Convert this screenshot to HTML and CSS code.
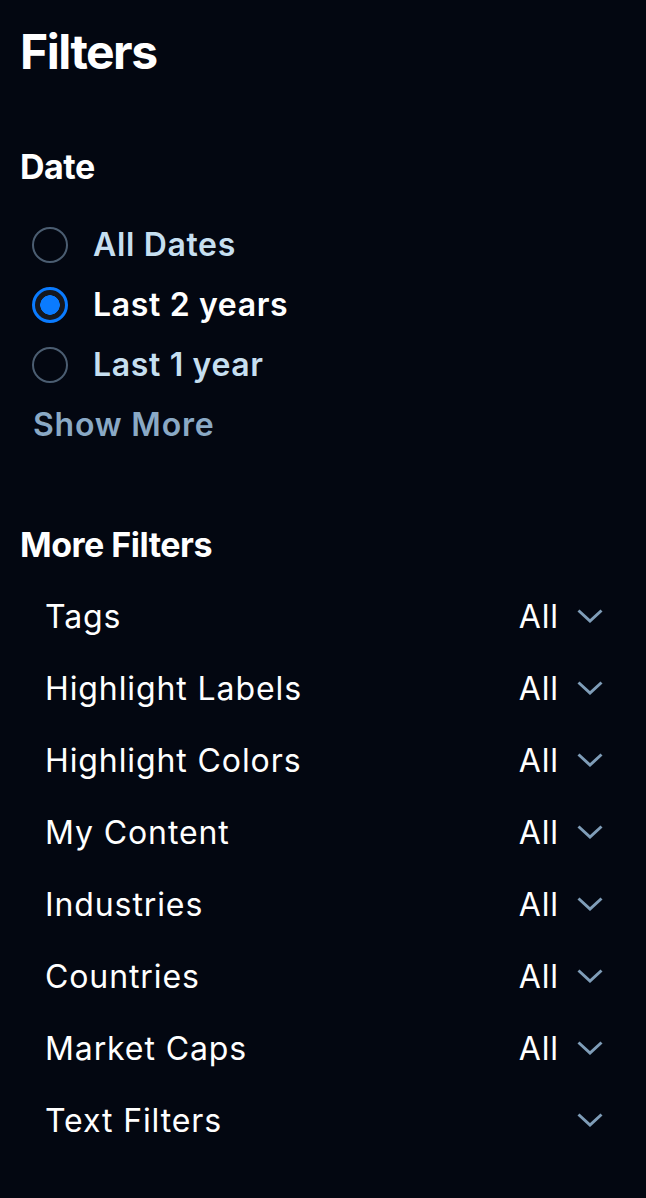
FILE: index.html
```html
<!DOCTYPE html>
<html lang="en">
<head>
<meta charset="utf-8">
<title>Filters</title>
<link rel="stylesheet" href="styles.css">
</head>
<body>
<aside class="panel">
  <h1 class="title">Filters</h1>

  <section class="date">
    <h2 class="section-title">Date</h2>
    <ul class="options">
      <li class="option"><span class="radio"></span><span class="option-label">All Dates</span></li>
      <li class="option selected"><span class="radio"></span><span class="option-label">Last 2 years</span></li>
      <li class="option"><span class="radio"></span><span class="option-label">Last 1 year</span></li>
    </ul>
    <div class="show-more">Show More</div>
  </section>

  <section class="more">
    <h2 class="section-title">More Filters</h2>
    <ul class="filters">
      <li class="filter"><span class="filter-name">Tags</span><span class="filter-value">All</span><svg class="chev" viewBox="0 0 26 14"><path d="M1.5 1.5 L13 12 L24.5 1.5"/></svg></li>
      <li class="filter"><span class="filter-name">Highlight Labels</span><span class="filter-value">All</span><svg class="chev" viewBox="0 0 26 14"><path d="M1.5 1.5 L13 12 L24.5 1.5"/></svg></li>
      <li class="filter"><span class="filter-name">Highlight Colors</span><span class="filter-value">All</span><svg class="chev" viewBox="0 0 26 14"><path d="M1.5 1.5 L13 12 L24.5 1.5"/></svg></li>
      <li class="filter"><span class="filter-name">My Content</span><span class="filter-value">All</span><svg class="chev" viewBox="0 0 26 14"><path d="M1.5 1.5 L13 12 L24.5 1.5"/></svg></li>
      <li class="filter"><span class="filter-name">Industries</span><span class="filter-value">All</span><svg class="chev" viewBox="0 0 26 14"><path d="M1.5 1.5 L13 12 L24.5 1.5"/></svg></li>
      <li class="filter"><span class="filter-name">Countries</span><span class="filter-value">All</span><svg class="chev" viewBox="0 0 26 14"><path d="M1.5 1.5 L13 12 L24.5 1.5"/></svg></li>
      <li class="filter"><span class="filter-name">Market Caps</span><span class="filter-value">All</span><svg class="chev" viewBox="0 0 26 14"><path d="M1.5 1.5 L13 12 L24.5 1.5"/></svg></li>
      <li class="filter"><span class="filter-name">Text Filters</span><span class="filter-value"></span><svg class="chev" viewBox="0 0 26 14"><path d="M1.5 1.5 L13 12 L24.5 1.5"/></svg></li>
    </ul>
  </section>
</aside>
</body>
</html>
```

FILE: styles.css
```css
html, body {
  margin: 0;
  padding: 0;
  background: #030711;
  height: 100%;
}
body {
  font-family: Inter, Roboto, "Noto Sans", "Liberation Sans", sans-serif;
  color: #ffffff;
}
.panel {
  padding: 24px 20px 0 20px;
}
.title {
  margin: 0;
  font-size: 48px;
  line-height: 56px;
  font-weight: 700;
  letter-spacing: -1.5px;
}
.section-title {
  margin: 0;
  font-size: 34px;
  line-height: 40px;
  font-weight: 700;
  letter-spacing: -0.5px;
}
.date {
  margin-top: 67px;
}
.options {
  list-style: none;
  margin: 28px 0 0 0;
  padding: 0;
}
.option {
  display: flex;
  align-items: center;
  height: 60px;
  gap: 25px;
  padding-left: 12px;
  color: #c6dff0;
}
.option-label {
  font-size: 32px;
  font-weight: 600;
  line-height: 40px;
  letter-spacing: 0.65px;
}
.radio {
  box-sizing: border-box;
  width: 36px;
  height: 36px;
  border-radius: 50%;
  border: 2.5px solid #4b5d71;
  flex: none;
}
.option.selected {
  color: #ffffff;
}
.option.selected .radio {
  border: 3px solid #0a7bff;
  background: radial-gradient(circle, #0a7bff 0 9.5px, #15181f 10px);
}
.show-more {
  height: 60px;
  line-height: 60px;
  padding-left: 13px;
  font-size: 32px;
  font-weight: 600;
  letter-spacing: 0.8px;
  color: #8aa9c5;
}
.more {
  margin-top: 70px;
}
.filters {
  list-style: none;
  margin: 15px 0 0 0;
  padding: 0;
}
.filter {
  display: flex;
  align-items: center;
  height: 72px;
  padding: 0 23px 0 25px;
  font-size: 32px;
  font-weight: 400;
  letter-spacing: 0.9px;
}
.filter-name {
  flex: 1;
}
.filter-value {
  margin-right: 18px;
}
.chev {
  width: 26px;
  height: 14px;
  flex: none;
  fill: none;
  stroke: #7f9db8;
  stroke-width: 3;
}
```
